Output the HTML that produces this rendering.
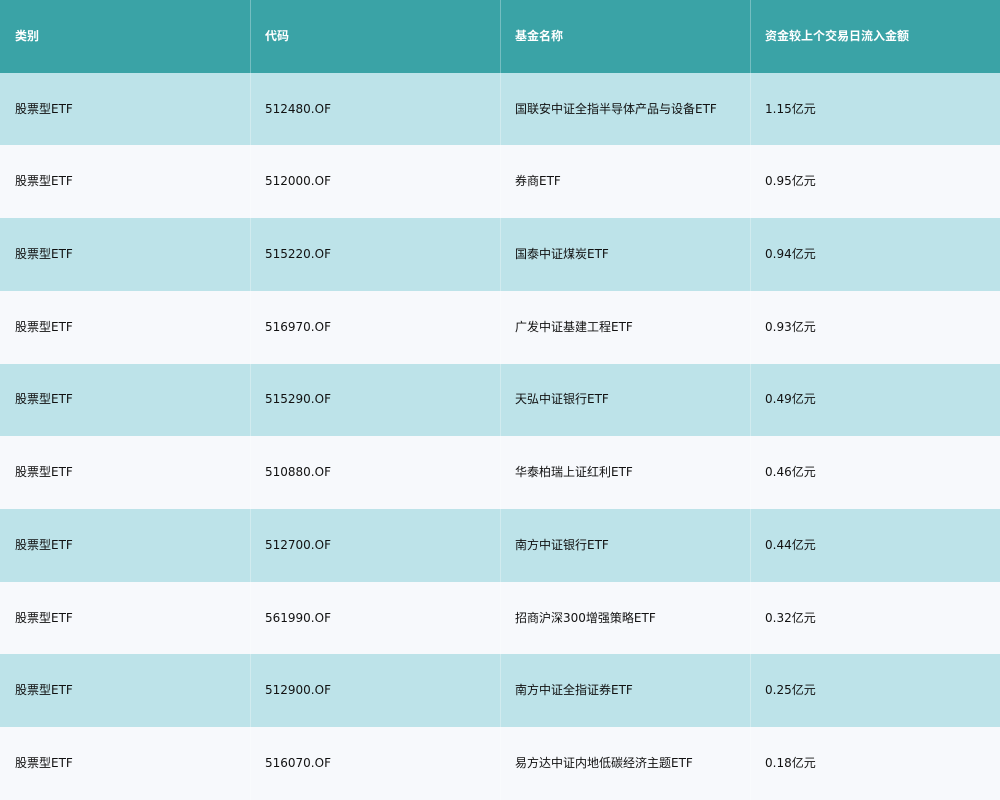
<!DOCTYPE html>
<html><head><meta charset="utf-8"><style>
html,body{margin:0;padding:0;width:1000px;height:800px;overflow:hidden;background:#f7f9fc}
table{border-collapse:collapse;width:1000px;height:800px;table-layout:fixed;font-family:"DejaVu Sans","Noto Sans CJK SC",sans-serif;font-size:12px;color:#111}
td,th{padding:0 0 1px 15px;text-align:left;height:71.72px;line-height:14px;box-shadow:inset 1px 0 0 rgba(255,255,255,0.3)}
td:first-child,th:first-child{box-shadow:none}
th{background:#3aa3a6;color:#fff;font-weight:bold}
tr:nth-child(even) td{background:#bde3e9}
tr:nth-child(odd) td{background:#f7f9fc}
</style></head><body>
<table>
<tr><th>类别</th><th>代码</th><th>基金名称</th><th>资金较上个交易日流入金额</th></tr>
<tr><td>股票型ETF</td><td>512480.OF</td><td>国联安中证全指半导体产品与设备ETF</td><td>1.15亿元</td></tr>
<tr><td>股票型ETF</td><td>512000.OF</td><td>券商ETF</td><td>0.95亿元</td></tr>
<tr><td>股票型ETF</td><td>515220.OF</td><td>国泰中证煤炭ETF</td><td>0.94亿元</td></tr>
<tr><td>股票型ETF</td><td>516970.OF</td><td>广发中证基建工程ETF</td><td>0.93亿元</td></tr>
<tr><td>股票型ETF</td><td>515290.OF</td><td>天弘中证银行ETF</td><td>0.49亿元</td></tr>
<tr><td>股票型ETF</td><td>510880.OF</td><td>华泰柏瑞上证红利ETF</td><td>0.46亿元</td></tr>
<tr><td>股票型ETF</td><td>512700.OF</td><td>南方中证银行ETF</td><td>0.44亿元</td></tr>
<tr><td>股票型ETF</td><td>561990.OF</td><td>招商沪深300增强策略ETF</td><td>0.32亿元</td></tr>
<tr><td>股票型ETF</td><td>512900.OF</td><td>南方中证全指证券ETF</td><td>0.25亿元</td></tr>
<tr><td>股票型ETF</td><td>516070.OF</td><td>易方达中证内地低碳经济主题ETF</td><td>0.18亿元</td></tr>
</table>
</body></html>
